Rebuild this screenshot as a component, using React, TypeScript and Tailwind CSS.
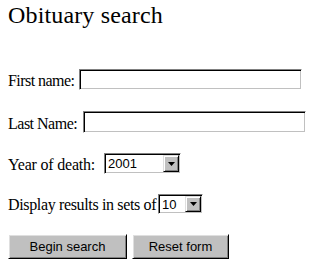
import React from "react";

const serif = { fontFamily: '"Liberation Serif", "Times New Roman", serif' };
const sans = { fontFamily: '"Liberation Sans", Arial, sans-serif' };

function TextBox({ w, h }: { w: string; h: string }) {
  return (
    <div
      className={`${w} ${h} bg-white border border-t-[#808080] border-l-[#808080] border-r-white border-b-white shadow-[inset_1px_1px_0_#000,inset_-1px_-1px_0_#c0c0c0]`}
    />
  );
}

function Select({ w, h, value }: { w: string; h: string; value: string }) {
  return (
    <div
      className={`${w} ${h} flex items-stretch bg-white border border-t-[#808080] border-l-[#808080] border-r-white border-b-white shadow-[inset_1px_1px_0_#000,inset_-1px_-1px_0_#c0c0c0] p-[1px]`}
    >
      <div className="flex-1 flex items-center pl-[2px] text-[13px] leading-none text-black" style={sans}>
        {value}
      </div>
      <div className="w-[16px] bg-[#c0c0c0] border border-t-[#dfdfdf] border-l-[#dfdfdf] border-r-black border-b-black shadow-[inset_1px_1px_0_#fff,inset_-1px_-1px_0_#808080] flex items-center justify-center">
        <svg width="7" height="4" viewBox="0 0 7 4">
          <polygon points="0,0 7,0 3.5,4" fill="#000" />
        </svg>
      </div>
    </div>
  );
}

function Btn({ w, children }: { w: string; children: React.ReactNode }) {
  return (
    <div
      className={`${w} h-[25px] bg-[#c0c0c0] border border-t-white border-l-white border-r-black border-b-black shadow-[inset_1px_1px_0_#dfdfdf,inset_-1px_-1px_0_#808080] flex items-center justify-center text-[13px] leading-none text-black`}
      style={sans}
    >
      {children}
    </div>
  );
}

export default function App() {
  return (
    <div className="w-[334px] h-[268px] bg-white text-black pl-[8px] pt-[3px]" style={serif}>
      <div className="text-[24px] leading-[24px] h-[24px] tracking-[0.15px]">Obituary search</div>

      <div className="mt-[42px] flex items-end h-[21px]">
        <span className="w-[71px] shrink-0 whitespace-nowrap text-[16px] leading-[16px] mb-[1px] tracking-[-0.55px]">
          First name:
        </span>
        <TextBox w="w-[223px]" h="h-[21px]" />
      </div>

      <div className="mt-[21px] flex items-end h-[22px]">
        <span className="w-[75px] shrink-0 whitespace-nowrap text-[16px] leading-[16px] mb-[1px] tracking-[-0.5px]">
          Last Name:
        </span>
        <TextBox w="w-[223px]" h="h-[22px]" />
      </div>

      <div className="mt-[20px] flex items-end h-[21px]">
        <span className="w-[96px] shrink-0 whitespace-nowrap text-[16px] leading-[16px] mb-[1px] tracking-[-0.2px]">
          Year of death:
        </span>
        <Select w="w-[77px]" h="h-[21px]" value="2001" />
      </div>

      <div className="mt-[20px] flex items-end h-[20px]">
        <span className="w-[150px] shrink-0 whitespace-nowrap text-[16px] leading-[16px] mb-[1px] tracking-[-0.35px]">
          Display results in sets of
        </span>
        <Select w="w-[45px]" h="h-[20px]" value="10" />
      </div>

      <div className="mt-[20px] flex gap-[5px]">
        <Btn w="w-[119px]">Begin search</Btn>
        <Btn w="w-[97px]">Reset form</Btn>
      </div>
    </div>
  );
}
